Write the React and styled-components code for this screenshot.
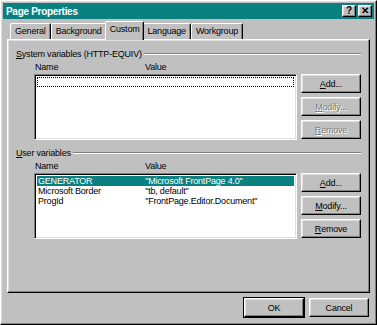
import React from "react"
import styled, { createGlobalStyle, css } from "styled-components"

const Global = createGlobalStyle`
  html, body {
    margin: 0;
    padding: 0;
    background: #c0c0c0;
  }
  body {
    font-family: "Liberation Sans", Arial, sans-serif;
    font-size: 9px;
    letter-spacing: -0.2px;
    color: #000;
  }
`

const raised = css`
  border-top: 1px solid #ffffff;
  border-left: 1px solid #ffffff;
  border-right: 1px solid #000000;
  border-bottom: 1px solid #000000;
  box-shadow: inset -1px -1px 0 #808080, inset 1px 1px 0 #dfdfdf;
`

const Window = styled.div`
  width: 377px;
  height: 325px;
  box-sizing: border-box;
  background: #c0c0c0;
  ${raised};
  padding: 2px;
  display: flex;
  flex-direction: column;
`

const TitleBar = styled.div`
  height: 16px;
  background: #0b8080;
  display: flex;
  align-items: center;
  padding: 0 2px 0 3px;
  color: #fff;
  font-weight: bold;
  font-size: 10px;
  letter-spacing: -0.3px;
`

const TitleText = styled.div`
  flex: 1;
`

const CapButton = styled.div`
  width: 14px;
  height: 12px;
  box-sizing: border-box;
  background: #c0c0c0;
  ${raised};
  color: #000;
  font-size: 10px;
  font-weight: bold;
  display: flex;
  align-items: center;
  justify-content: center;
  margin-left: ${(p) => (p.$gap ? "2px" : "0")};
  line-height: 1;
`

const Body = styled.div`
  flex: 1;
  display: flex;
  flex-direction: column;
  padding: 2px 4px 0 4px;
`

const TabRow = styled.div`
  display: flex;
  align-items: flex-end;
  height: 18px;
  padding-left: 3px;
  position: relative;
  z-index: 1;
`

const Tab = styled.div`
  box-sizing: border-box;
  height: ${(p) => (p.$active ? "19px" : "16px")};
  margin: ${(p) => (p.$active ? "0 -2px -1px -2px" : "0")};
  padding: ${(p) => (p.$active ? "2px 4px 0 4px" : "2px 4px 0 4px")};
  background: #c0c0c0;
  border-top: 1px solid #ffffff;
  border-left: 1px solid #ffffff;
  border-right: 1px solid #000;
  box-shadow: inset -1px 0 0 #808080;
  border-radius: 2px 2px 0 0;
  display: flex;
  align-items: flex-start;
  justify-content: center;
  white-space: nowrap;
  position: relative;
  z-index: ${(p) => (p.$active ? 2 : 0)};
`

const Panel = styled.div`
  height: 254px;
  box-sizing: border-box;
  ${raised};
  padding: 7px 8px 0 8px;
  display: flex;
  flex-direction: column;
`

const Section = styled.div`
  display: flex;
  flex-direction: column;
  margin-bottom: 6px;
`

const Heading = styled.div`
  display: flex;
  align-items: center;
  height: 13px;
  white-space: nowrap;
  &::after {
    content: "";
    flex: 1;
    margin-left: 2px;
    height: 0;
    border-top: 1px solid #808080;
    border-bottom: 1px solid #ffffff;
  }
`

const Key = styled.span`
  text-decoration: underline;
`

const ColHeads = styled.div`
  display: flex;
  height: 13px;
  align-items: center;
  padding-left: 19px;
  margin-bottom: 1px;
`

const Col = styled.div`
  width: ${(p) => p.$w}px;
`

const ListArea = styled.div`
  display: flex;
  padding-left: 18px;
`

const ListBox = styled.div`
  width: 263px;
  height: 66px;
  box-sizing: border-box;
  background: #fff;
  border-top: 1px solid #808080;
  border-left: 1px solid #808080;
  border-right: 1px solid #ffffff;
  border-bottom: 1px solid #ffffff;
  box-shadow: inset 1px 1px 0 #000, inset -1px -1px 0 #dfdfdf;
  padding: 2px;
`

const Row = styled.div`
  display: flex;
  height: 10px;
  line-height: 10px;
  box-sizing: border-box;
  padding-left: 1px;
  background: ${(p) => (p.$selected ? "#0b8080" : "transparent")};
  color: ${(p) => (p.$selected ? "#fff" : "#000")};
  outline: ${(p) => (p.$focus ? "1px dotted #000" : "none")};
  outline-offset: -1px;
  white-space: nowrap;
`

const Cell = styled.div`
  width: ${(p) => p.$w}px;
  overflow: hidden;
`

const Buttons = styled.div`
  display: flex;
  flex-direction: column;
  gap: 4px;
  margin-left: 4px;
`

const Button = styled.div`
  width: 60px;
  height: 19px;
  box-sizing: border-box;
  background: #c0c0c0;
  ${raised};
  display: flex;
  align-items: center;
  justify-content: center;
  color: ${(p) => (p.$disabled ? "#808080" : "#000")};
  text-shadow: ${(p) => (p.$disabled ? "1px 1px 0 #fff" : "none")};
  ${(p) =>
    p.$default &&
    css`
      outline: 1px solid #000;
      outline-offset: 0;
    `}
`

const Footer = styled.div`
  display: flex;
  justify-content: flex-end;
  gap: 5px;
  padding: 5px 1px 0 0;
`

function VarList({ rows }) {
  return (
    <ListBox>
      {rows.map((r, i) => (
        <Row key={i} $selected={r.selected} $focus={r.focus}>
          <Cell $w={108}>{r.name}</Cell>
          <Cell $w={150}>{r.value}</Cell>
        </Row>
      ))}
    </ListBox>
  )
}

function VarSection({ title, accel, rows, enabled }) {
  return (
    <Section>
      <Heading>
        <span>
          <Key>{accel}</Key>
          {title}
        </span>
      </Heading>
      <ColHeads>
        <Col $w={110}>Name</Col>
        <Col $w={100}>Value</Col>
      </ColHeads>
      <ListArea>
        <VarList rows={rows} />
        <Buttons>
          <Button>
            <span>
              <Key>A</Key>dd...
            </span>
          </Button>
          <Button $disabled={!enabled}>
            <span>
              <Key>M</Key>odify...
            </span>
          </Button>
          <Button $disabled={!enabled}>
            <span>
              <Key>R</Key>emove
            </span>
          </Button>
        </Buttons>
      </ListArea>
    </Section>
  )
}

const tabs = ["General", "Background", "Custom", "Language", "Workgroup"]

export default function App() {
  return (
    <>
      <Global />
      <Window>
        <TitleBar>
          <TitleText>Page Properties</TitleText>
          <CapButton>?</CapButton>
          <CapButton $gap>✕</CapButton>
        </TitleBar>
        <Body>
          <TabRow>
            {tabs.map((t) => (
              <Tab key={t} $active={t === "Custom"}>
                {t}
              </Tab>
            ))}
          </TabRow>
          <Panel>
            <VarSection
              accel="S"
              title="ystem variables (HTTP-EQUIV)"
              rows={[{ name: "", value: "", focus: true }]}
              enabled={false}
            />
            <VarSection
              accel="U"
              title="ser variables"
              rows={[
                { name: "GENERATOR", value: "\"Microsoft FrontPage 4.0\"", selected: true },
                { name: "Microsoft Border", value: "\"tb, default\"" },
                { name: "ProgId", value: "\"FrontPage.Editor.Document\"" },
              ]}
              enabled
            />
          </Panel>
          <Footer>
            <Button $default>OK</Button>
            <Button>Cancel</Button>
          </Footer>
        </Body>
      </Window>
    </>
  )
}
